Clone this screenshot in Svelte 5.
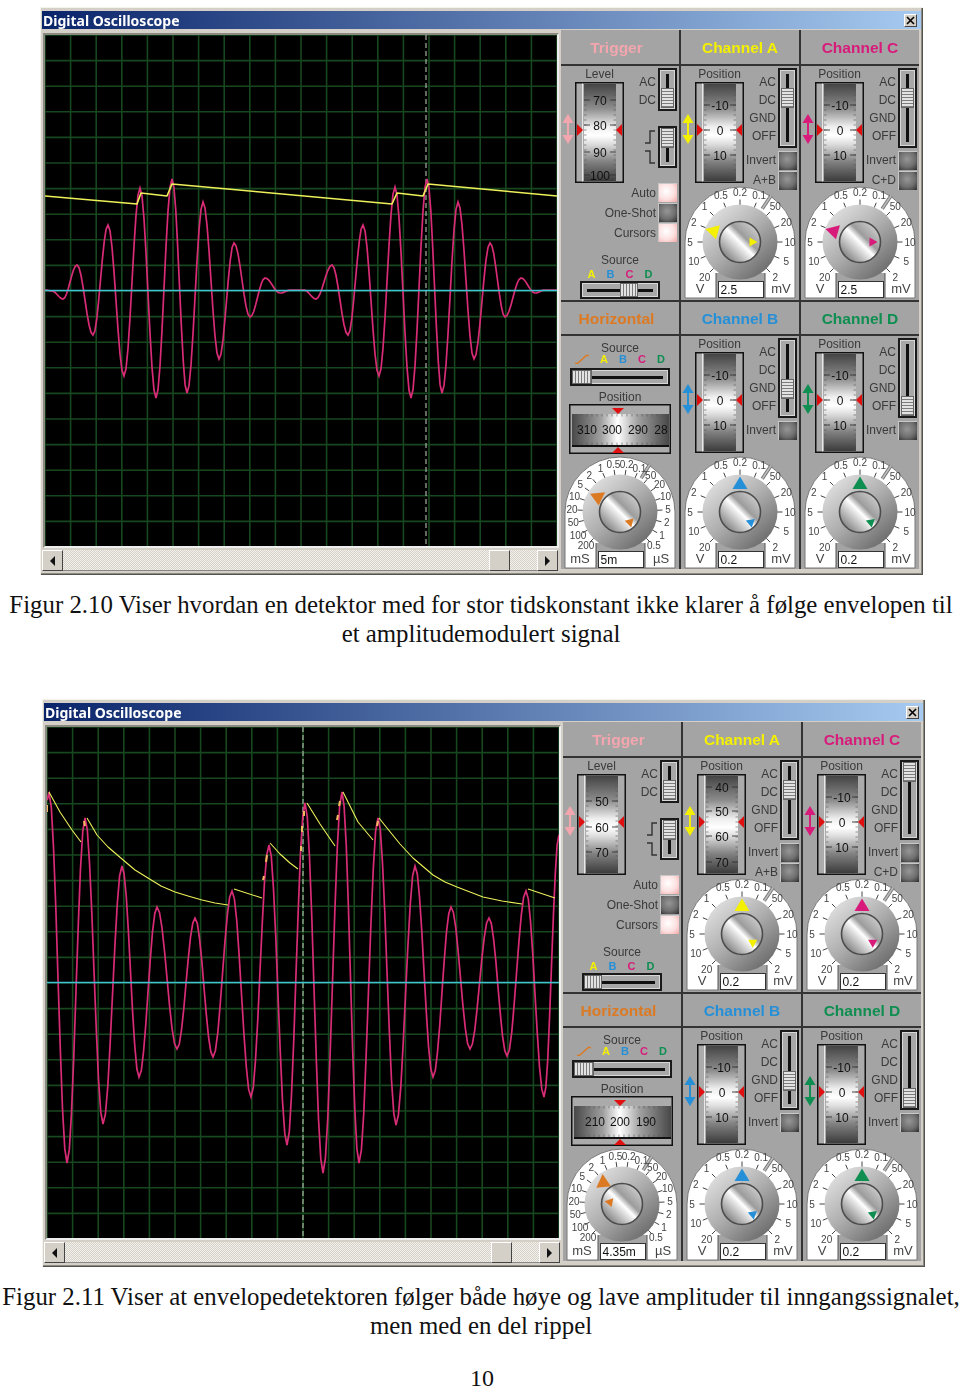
<script>
	const VOLTS = ["20", "10", "5", "2", "1", "0.5", "0.2", "0.1", "50", "20", "10", "5", "2"];
	const TIMES = ["200", "100", "50", "20", "10", "5", "2", "1", "0.5", "0.2", "0.1", "50", "20", "10", "5", "2", "1", "0.5"];
	const ZERO = [["-10", 23], ["0", 48], ["10", 73]];

	const YELLOW = "#f4f000", PINK = "#d81b7a", BLUE = "#2590d8", GREEN = "#0e8e50", ORANGE = "#dc7a24", ROSE = "#f3a6ae";

	const wavePath = (points) => {
		let d = `M${points[0][0]} ${points[0][1]}`;
		for (let i = 1; i < points.length; i++) {
			const [x0, y0] = points[i - 1];
			const [x1, y1] = points[i];
			for (let s = 1; s <= 8; s++) {
				const t = s / 8;
				const y = y0 + ((y1 - y0) * (1 - Math.cos(Math.PI * t))) / 2;
				d += `L${(x0 + (x1 - x0) * t).toFixed(1)} ${y.toFixed(1)}`;
			}
		}
		return d;
	};

	const linePath = (segments) =>
		segments.map((seg) => "M" + seg.map((p) => p.join(" ")).join("L")).join("");

	const polar = (r, deg) => [
		59 + r * Math.sin((deg * Math.PI) / 180),
		57 - r * Math.cos((deg * Math.PI) / 180)
	];

	const voltCh = (name, color, value, thumb, labels, big, small, extra) => ({
		name, color, value, thumb, labels, big, small, extra
	});

	const scopes = [
		{
			ox: 45,
			oy: 35,
			wave: wavePath([
				[45, 290], [52, 291], [63, 299], [77, 265], [93, 335], [108, 225], [124, 376], [140, 188],
				[156, 398], [172, 179], [187, 393], [203, 202], [219, 359], [234, 243], [250, 317], [265, 278],
				[280, 293], [291, 290], [304, 290], [316, 299], [332, 265], [348, 335], [363, 225], [379, 376],
				[395, 187], [411, 398], [427, 179], [442, 393], [458, 202], [474, 359], [490, 243], [505, 317],
				[521, 278], [535, 293], [545, 290], [557, 290]
			]),
			env: linePath([[[45, 196], [137, 204], [141, 193], [167, 196], [172, 184], [392, 204], [397, 193], [423, 196], [428, 184], [557, 196]]]),
			envWidth: 1.6,
			marks: "",
			cursor: 426,
			zero: 290.5,
			level: [["70", 18], ["80", 43], ["90", 70], ["100", 93]],
			hwheel: [["310", 15], ["300", 40], ["290", 66], ["28", 89]],
			srcThumb: 38,
			time: "5m",
			timeBig: { x: -22, y: -14, r: 175 },
			timeSmall: { x: 9, y: 10, r: -75 },
			a: voltCh("Channel A", YELLOW, "2.5", 18, ZERO, { x: -26, y: -10, r: 165 }, { x: 13, y: 0, r: 90 }, "A+B"),
			c: voltCh("Channel C", PINK, "2.5", 18, ZERO, { x: -26, y: -10, r: 165 }, { x: 13, y: 0, r: 90 }, "C+D"),
			b: voltCh("Channel B", BLUE, "0.2", 39, ZERO, { x: 0, y: -28, r: 0 }, { x: 10, y: 10, r: -70 }),
			d: voltCh("Channel D", GREEN, "0.2", 56, ZERO, { x: 0, y: -28, r: 0 }, { x: 10, y: 10, r: -70 })
		},
		{
			ox: 47,
			oy: 727,
			wave: wavePath([
				[47, 800], [49, 793], [67, 1163], [85, 818], [103, 1124], [122, 866], [139, 1077], [157, 907],
				[177, 1049], [195, 918], [213, 1057], [232, 891], [251, 1097], [269, 845], [287, 1145], [305, 803],
				[323, 1173], [342, 792], [359, 1163], [378, 818], [396, 1125], [415, 866], [433, 1077], [451, 907],
				[470, 1049], [489, 918], [507, 1056], [526, 891], [544, 1097], [559, 835]
			]),
			env: linePath([
				[[49, 792], [60, 812], [72, 830], [81, 842]],
				[[87, 818], [97, 835], [108, 847], [122, 859], [135, 870], [148, 878], [161, 886], [175, 892], [188, 896], [202, 900], [215, 903], [228, 905]],
				[[234, 889], [262, 898]],
				[[270, 843], [280, 854], [290, 863], [298, 869]],
				[[307, 803], [320, 824], [335, 846]],
				[[343, 792], [358, 822], [373, 840]],
				[[379, 818], [387, 828], [400, 844], [413, 858], [433, 875], [445, 882], [457, 887], [470, 892], [483, 897], [502, 901], [522, 904]],
				[[528, 889], [555, 898]]
			]),
			envWidth: 1.1,
			marks: linePath([
				[[47, 805], [47, 812]], [[84, 821], [85, 826]], [[267, 855], [266, 862]], [[264, 876], [263, 880]],
				[[301, 846], [301, 851]], [[302, 826], [302, 832]], [[304, 811], [304, 816]], [[340, 801], [339, 806]],
				[[338, 815], [337, 820]], [[378, 821], [377, 826]]
			]),
			cursor: 303,
			zero: 982.5,
			level: [["50", 27], ["60", 53], ["70", 78]],
			hwheel: [["210", 21], ["200", 46], ["190", 72]],
			srcThumb: 0,
			time: "4.35m",
			timeBig: { x: -18, y: -21, r: 115 },
			timeSmall: { x: -13, y: -2, r: -80 },
			a: voltCh("Channel A", YELLOW, "0.2", 18, [["40", 13], ["50", 37], ["60", 62], ["70", 88]], { x: 0, y: -28, r: 0 }, { x: 10, y: 8, r: -60 }, "A+B"),
			c: voltCh("Channel C", PINK, "0.2", 0, ZERO, { x: 0, y: -28, r: 0 }, { x: 10, y: 8, r: -60 }, "C+D"),
			b: voltCh("Channel B", BLUE, "0.2", 39, ZERO, { x: 0, y: -28, r: 0 }, { x: 10, y: 10, r: -70 }),
			d: voltCh("Channel D", GREEN, "0.2", 56, ZERO, { x: 0, y: -28, r: 0 }, { x: 10, y: 10, r: -70 })
		}
	];

	const gridX = Array.from({ length: 21 }, (_, i) => i * 25.6);
	const ticks = Array.from({ length: 22 }, (_, i) => i * 5);
</script>

{#snippet dial(labels, radius, start, step, slit, left, right, value, color, big, small)}
	<svg class="dial" width="118" height="114" viewBox="0 0 118 114">
		<path d="M4 113V57A55 55 0 0 1 114 57V113Z" fill="#fff" stroke="#777" stroke-width="1" />
		<path d="M35 113.5V88H84V113.5Z" fill="#a4a4a4" />
		<path d="M35 113V88M84 113V88" stroke="#555" stroke-width="1" />
		<line x1={polar(40, slit)[0]} y1={polar(40, slit)[1]} x2={polar(56, slit)[0]} y2={polar(56, slit)[1]} stroke="#777" stroke-width="3.5" />
		<line x1={polar(40, slit)[0]} y1={polar(40, slit)[1]} x2={polar(56, slit)[0]} y2={polar(56, slit)[1]} stroke="#bbb" stroke-width="1.6" />
		{#each labels as text, i}
			{@const deg = start + i * step}
			{@const p = polar(radius, deg)}
			{@const t0 = polar(37, deg)}
			{@const t1 = polar(42.5, deg)}
			<line x1={t0[0]} y1={t0[1]} x2={t1[0]} y2={t1[1]} stroke="#444" stroke-width="1" />
			<text x={p[0]} y={p[1] + 3.5} text-anchor="middle">{text}</text>
		{/each}
		<circle cx="59" cy="57" r="37.5" fill="url(#knobOuter)" />
		<circle cx="59" cy="57" r="20.5" fill="url(#knobInner)" stroke="#4c4c4c" stroke-width="1.6" />
		<polygon points="0,-7.5 7.5,5 -7.5,5" fill={color} transform="translate({59 + big.x} {57 + big.y}) rotate({big.r})" />
		<polygon points="0,-4.5 4.5,3.5 -4.5,3.5" fill={color} transform="translate({59 + small.x} {57 + small.y}) rotate({small.r})" />
		<text class="unit" x="19" y="108" text-anchor="middle">{left}</text>
		<text class="unit" x="100" y="108" text-anchor="middle">{right}</text>
		<rect x="37.5" y="96.5" width="45" height="16" fill="#fff" stroke="#333" stroke-width="1" />
		<text class="val" x="39.5" y="108.5">{value}</text>
	</svg>
{/snippet}

{#snippet wheel(labels)}
	<svg class="wheel" width="49" height="101" viewBox="0 0 49 101">
		<rect x="0.75" y="0.75" width="47.5" height="99.5" fill="#ababab" stroke="#111" stroke-width="1.5" />
		<path d="M7.5 1.5V99.5" stroke="#e8e8e8" stroke-width="1" />
		<svg x="9" y="2" width="32" height="97" viewBox="0 0 32 97">
			<rect width="32" height="97" fill="url(#drumV)" />
			{#each ticks as t}
				<path d="M0 {(labels[0][1] % 5) - 2 + t}H2.5M29.5 {(labels[0][1] % 5) - 2 + t}H32" stroke="#555" stroke-width="0.6" />
			{/each}
			{#each labels as [text, y]}
				<path d="M0 {y - 2}H6M26 {y - 2}H32" stroke="#333" stroke-width="0.9" />
				<text x="16" y={y + 2.5} text-anchor="middle">{text}</text>
			{/each}
		</svg>
		<polygon points="2,42 8,48 2,54" fill="#e01010" />
		<polygon points="47,42 41,48 47,54" fill="#e01010" />
	</svg>
{/snippet}

{#snippet hwheel(labels)}
	<svg class="wheel" width="102" height="50" viewBox="0 0 102 50">
		<rect x="0.75" y="0.75" width="100.5" height="48.5" fill="#ababab" stroke="#111" stroke-width="1.5" />
		<svg x="3" y="10" width="97" height="31" viewBox="0 0 97 31">
			<rect width="97" height="31" fill="url(#drumH)" />
			{#each ticks as t}
				<path d="M{t} 0V2.5M{t} 28.5V31" stroke="#555" stroke-width="0.6" />
			{/each}
			{#each labels as [text, x]}
				<text x={x} y="20" text-anchor="middle">{text}</text>
			{/each}
		</svg>
		<rect x="3" y="41" width="97" height="2" fill="#111" />
		<polygon points="43,4 55,4 49,10" fill="#e01010" />
		<polygon points="43,49 55,49 49,43" fill="#e01010" />
	</svg>
{/snippet}

{#snippet upDown(color)}
	<svg class="updown" width="12" height="32" viewBox="0 0 12 32">
		<path d="M6 8V24" stroke={color} stroke-width="2" />
		<polygon points="6,1 11.5,10 0.5,10" fill={color} />
		<polygon points="6,31 11.5,22 0.5,22" fill={color} />
	</svg>
{/snippet}

{#snippet vswitch(height, top)}
	<div class="vswitch" style="height:{height}px">
		<span class="thumb" style="top:{top}px"></span>
	</div>
{/snippet}

{#snippet hslider(width, left, thumbWidth)}
	<div class="hslider" style="width:{width}px">
		<span class="thumb-h" style="left:{left}px;width:{thumbWidth}px"></span>
	</div>
{/snippet}

{#snippet channel(ch)}
	<div class="cell">
		<h3 style="color:{ch.color}">{ch.name}</h3>
		<div class="body">
			<div class="top">
				<div class="arrow-col">{@render upDown(ch.color)}</div>
				<div class="wheel-col">
					<span class="label">Position</span>
					{@render wheel(ch.labels)}
				</div>
				<div class="right-col">
					<div class="row switch-row">
						<div class="coupling">
							<span>AC</span><span>DC</span><span>GND</span><span>OFF</span>
						</div>
						{@render vswitch(80, ch.thumb)}
					</div>
					<div class="row btn-row"><span>Invert</span><i class="btn"></i></div>
					{#if ch.extra}
						<div class="row btn-row"><span>{ch.extra}</span><i class="btn"></i></div>
					{/if}
				</div>
			</div>
			{@render dial(VOLTS, 50, -135, 22.5, 33.75, "V", "mV", ch.value, ch.color, ch.big, ch.small)}
		</div>
	</div>
{/snippet}

{#snippet oscilloscope(s)}
	<section class="scope">
		<header class="titlebar">
			<span>Digital Oscilloscope</span>
			<button class="close" aria-label="Close">
				<svg width="9" height="9" viewBox="0 0 9 9"><path d="M1 1L8 8M8 1L1 8" stroke="#000" stroke-width="1.6" /></svg>
			</button>
		</header>
		<div class="scope-body">
			<div class="display">
				<div class="screen-frame">
					<svg class="screen" width="512" height="511" viewBox="{s.ox} {s.oy} 512 511">
						<rect x={s.ox} y={s.oy} width="512" height="511" fill="#000" />
						{#each gridX as g}
							<line x1={s.ox + g} y1={s.oy} x2={s.ox + g} y2={s.oy + 511} class="grid" />
							<line x1={s.ox} y1={s.oy + g} x2={s.ox + 512} y2={s.oy + g} class="grid" />
						{/each}
						<line x1={s.cursor} y1={s.oy} x2={s.cursor} y2={s.oy + 511} stroke="#c8d0c0" stroke-width="1" stroke-dasharray="5 3" />
						<path d={s.wave} class="wave" />
						<path d={s.env} class="env" stroke-width={s.envWidth} />
						<path d={s.marks} class="marks" />
						<line x1={s.ox} y1={s.zero} x2={s.ox + 512} y2={s.zero} stroke="#3fc3d4" stroke-width="1.6" />
					</svg>
				</div>
				<div class="scrollbar">
					<span class="sb-btn"><i class="tri-l"></i></span>
					<span class="sb-track"></span>
					<span class="sb-btn sb-thumb"></span>
					<span class="sb-track short"></span>
					<span class="sb-btn"><i class="tri-r"></i></span>
				</div>
			</div>
			<div class="controls">
				<div class="cell">
					<h3 class="offset" style="color:{ROSE}">Trigger</h3>
					<div class="body">
						<div class="top">
							<div class="arrow-col">{@render upDown(ROSE)}</div>
							<div class="wheel-col">
								<span class="label">Level</span>
								{@render wheel(s.level)}
							</div>
							<div class="right-col">
								<div class="row switch-row">
									<div class="coupling"><span>AC</span><span>DC</span></div>
									{@render vswitch(43, 18)}
								</div>
								<div class="row edge-row">
									<svg width="12" height="38" viewBox="0 0 12 38">
										<path d="M1 15H6V3H11M1 23H6V35H11" fill="none" stroke="#333" stroke-width="1.4" />
									</svg>
									{@render vswitch(42, 0)}
								</div>
							</div>
						</div>
						<div class="modes">
							<div class="row btn-row"><span>Auto</span><i class="btn lit"></i></div>
							<div class="row btn-row"><span>One-Shot</span><i class="btn"></i></div>
							<div class="row btn-row"><span>Cursors</span><i class="btn lit"></i></div>
						</div>
						<div class="source">
							<span class="label">Source</span>
							<div class="abcd">
								<b style="color:{YELLOW}">A</b><b style="color:{BLUE}">B</b><b style="color:{PINK}">C</b><b style="color:{GREEN}">D</b>
							</div>
							{@render hslider(80, s.srcThumb, 18)}
						</div>
					</div>
				</div>
				{@render channel(s.a)}
				{@render channel(s.c)}
				<div class="cell lower">
					<h3 class="offset" style="color:{ORANGE}">Horizontal</h3>
					<div class="body">
						<div class="horiz">
							<span class="label">Source</span>
							<div class="abcd wide">
								<svg width="14" height="12" viewBox="0 0 16 12"><path d="M0 11H3L13 2H16" fill="none" stroke={ORANGE} stroke-width="1.6" /></svg>
								<b style="color:{YELLOW}">A</b><b style="color:{BLUE}">B</b><b style="color:{PINK}">C</b><b style="color:{GREEN}">D</b>
							</div>
							{@render hslider(100, 0, 20)}
							<span class="label pos">Position</span>
							{@render hwheel(s.hwheel)}
						</div>
						{@render dial(TIMES, 48, -135, 270 / 17, 32, "mS", "µS", s.time, ORANGE, s.timeBig, s.timeSmall)}
					</div>
				</div>
				{@render channel(s.b)}
				{@render channel(s.d)}
			</div>
		</div>
	</section>
{/snippet}

<svg class="defs" aria-hidden="true">
	<defs>
		<linearGradient id="drumV" x1="0" y1="0" x2="0" y2="1">
			<stop offset="0" stop-color="#444" />
			<stop offset="0.25" stop-color="#8c8c8c" />
			<stop offset="0.44" stop-color="#eee" />
			<stop offset="0.53" stop-color="#fff" />
			<stop offset="0.62" stop-color="#ddd" />
			<stop offset="0.8" stop-color="#828282" />
			<stop offset="1" stop-color="#3c3c3c" />
		</linearGradient>
		<linearGradient id="drumH" x1="0" y1="0" x2="1" y2="0">
			<stop offset="0" stop-color="#484848" />
			<stop offset="0.3" stop-color="#a0a0a0" />
			<stop offset="0.47" stop-color="#fff" />
			<stop offset="0.68" stop-color="#a0a0a0" />
			<stop offset="1" stop-color="#484848" />
		</linearGradient>
		<linearGradient id="knobOuter" x1="0.15" y1="0.1" x2="0.85" y2="0.9">
			<stop offset="0" stop-color="#dedede" />
			<stop offset="0.5" stop-color="#acacac" />
			<stop offset="1" stop-color="#6c6c6c" />
		</linearGradient>
		<linearGradient id="knobInner" x1="0.1" y1="0.9" x2="0.9" y2="0.1">
			<stop offset="0" stop-color="#777" />
			<stop offset="0.38" stop-color="#dcdcdc" />
			<stop offset="0.5" stop-color="#fff" />
			<stop offset="0.64" stop-color="#9c9c9c" />
			<stop offset="1" stop-color="#d0d0d0" />
		</linearGradient>
	</defs>
</svg>

<main class="page">
	{@render oscilloscope(scopes[0])}
	<p class="caption">
		Figur 2.10 Viser hvordan en detektor med for stor tidskonstant ikke klarer å følge envelopen til<br />
		et amplitudemodulert signal
	</p>
	<div class="second">{@render oscilloscope(scopes[1])}</div>
	<p class="caption">
		Figur 2.11 Viser at envelopedetektoren følger både høye og lave amplituder til inngangssignalet,<br />
		men med en del rippel
	</p>
	<p class="pageno">10</p>
</main>

<style>
	:global(body) {
		background: #fff;
		overflow: hidden;
	}

	.defs {
		display: block;
		width: 0;
		height: 0;
	}

	.page {
		width: 960px;
		padding-top: 7px;
		font-family: "Liberation Serif", "Times New Roman", serif;
		color: #111;
	}

	.scope {
		width: 883px;
		height: 568px;
		margin-left: 40px;
		padding: 4px 2px 6px;
		box-sizing: border-box;
		background: #d4d0c8;
		box-shadow: inset 1px 1px 0 #f4f2ec, inset -1px -1px 0 #55534e, inset -2px -2px 0 #8c8a84;
		font-family: "Liberation Sans", Arial, sans-serif;
		filter: blur(0.35px);
	}

	.second {
		margin-top: 51px;
		margin-left: 2px;
	}

	.titlebar {
		display: flex;
		align-items: center;
		justify-content: space-between;
		height: 18px;
		margin-bottom: 1px;
		padding: 0 4px 0 1px;
		background: linear-gradient(90deg, #0a246a, #a6caf0);
		color: #fff;
		font: bold 14px "Noto Sans", Tahoma, sans-serif;
	}

	.close {
		display: flex;
		align-items: center;
		justify-content: center;
		width: 13px;
		height: 13px;
		padding: 0;
		border: 1px solid;
		border-color: #fff #444 #444 #fff;
		background: #d4d0c8;
	}

	.scope-body {
		display: flex;
		align-items: flex-start;
	}

	.display {
		width: 519px;
		flex: none;
	}

	.screen-frame {
		width: 512px;
		margin: 3px 0 2px 1px;
		border: 2px solid;
		border-color: #8a8a80 #eee #eee #8a8a80;
		line-height: 0;
	}

	.screen {
		display: block;
	}

	.grid {
		stroke: #17471f;
		stroke-width: 1.6;
	}

	.wave {
		fill: none;
		stroke: #d82c76;
		stroke-width: 1.7;
	}

	.env {
		fill: none;
		stroke: #eef05a;
		stroke-linejoin: round;
	}

	.marks {
		fill: none;
		stroke: #f5b860;
		stroke-width: 2;
	}

	.scrollbar {
		display: flex;
		width: 516px;
		height: 21px;
	}

	.sb-btn {
		display: flex;
		align-items: center;
		justify-content: center;
		flex: none;
		width: 21px;
		box-sizing: border-box;
		background: #d4d0c8;
		border: 1px solid;
		border-color: #fff #444 #444 #fff;
	}

	.sb-track {
		flex: 1;
		background: repeating-conic-gradient(#f4f2ec 0 25%, #d4d0c8 0 50%) 0 0 / 2px 2px;
		border-bottom: 1px solid #888;
	}

	.sb-track.short {
		flex: none;
		width: 27px;
	}

	.tri-l,
	.tri-r {
		width: 0;
		height: 0;
		border: 5px solid transparent;
	}

	.tri-l {
		border-right-color: #111;
		border-left-width: 0;
	}

	.tri-r {
		border-left-color: #111;
		border-right-width: 0;
	}

	.controls {
		display: grid;
		grid-template-columns: repeat(3, 118px);
		grid-template-rows: 270px 269px;
		column-gap: 2px;
		flex: none;
		background: #333;
	}

	.cell {
		display: flex;
		flex-direction: column;
		row-gap: 2px;
	}

	.cell:nth-child(n + 4) {
		padding-top: 2px;
	}

	h3 {
		height: 34px;
		margin: 0;
		background: #a4a4a4;
		font: bold 15.5px/36px "Liberation Sans", Arial, sans-serif;
		text-align: center;
	}

	h3.offset {
		padding-right: 7px;
	}

	.cell:nth-child(n + 4) h3 {
		height: 32px;
		line-height: 34px;
	}

	.body {
		flex: 1;
		background: #a4a4a4;
		color: #3a3a3a;
		font-size: 12px;
	}

	.top {
		display: flex;
		height: 119px;
	}

	.arrow-col {
		width: 14px;
		padding-top: 47px;
		padding-left: 1px;
		box-sizing: border-box;
		flex: none;
	}

	.updown {
		display: block;
	}

	.wheel-col {
		display: flex;
		flex-direction: column;
		align-items: center;
		width: 49px;
		flex: none;
		padding-top: 1px;
	}

	.label {
		display: block;
		height: 15px;
		line-height: 15px;
		font-size: 12px;
		text-align: center;
	}

	.wheel {
		display: block;
		flex: none;
	}

	.wheel text {
		font: 12px "Liberation Sans", Arial, sans-serif;
		fill: #111;
	}

	.right-col {
		flex: 1;
		padding: 2px 2px 0 0;
	}

	.row {
		display: flex;
		justify-content: flex-end;
		gap: 2px;
	}

	.switch-row {
		align-items: flex-start;
	}

	.coupling {
		display: flex;
		flex-direction: column;
		align-items: flex-end;
		padding-top: 5px;
		line-height: 18px;
	}

	.vswitch {
		position: relative;
		box-sizing: border-box;
		width: 19px;
		border: 2px solid #1a1a1a;
		outline: 1px solid #d8d8d8;
		outline-offset: -3px;
		background: #a8a8a8;
	}

	.vswitch::before {
		content: "";
		position: absolute;
		left: 6px;
		top: 4px;
		bottom: 4px;
		width: 3px;
		background: #111;
	}

	.thumb {
		position: absolute;
		left: 1px;
		width: 13px;
		height: 20px;
		background: repeating-linear-gradient(#e2e2e2 0 2px, #7c7c7c 2px 3px);
		border: 1px solid #666;
		box-sizing: border-box;
	}

	.btn-row {
		align-items: center;
		margin-top: 3px;
		height: 18px;
	}

	.btn-row + .btn-row {
		margin-top: 2px;
	}

	.btn {
		flex: none;
		display: block;
		width: 19px;
		height: 19px;
		background: radial-gradient(circle at 45% 40%, #969696, #6e6e6e 55%, #2c2c2c);
		border-top: 1px solid #c8c8c8;
		border-left: 1px solid #c8c8c8;
		box-sizing: border-box;
	}

	.btn.lit {
		background: radial-gradient(circle at 40% 40%, #fff, #fde0e0 55%, #f0a6a6);
	}

	.edge-row {
		align-items: center;
		margin-top: 15px;
	}

	.modes {
		display: flex;
		flex-direction: column;
		margin-top: -3px;
		padding-right: 2px;
	}

	.modes .btn-row,
	.modes .btn-row + .btn-row {
		height: 19px;
		margin-top: 1px;
	}

	.source {
		display: flex;
		flex-direction: column;
		align-items: center;
		margin-top: 11px;
	}

	.abcd {
		display: flex;
		justify-content: center;
		align-items: center;
		gap: 11px;
		height: 14px;
		margin-top: -1px;
		font-size: 11px;
	}

	.abcd.wide {
		box-sizing: content-box;
		height: 14px;
		margin-top: -4px;
		padding-bottom: 2px;
	}

	.hslider {
		position: relative;
		box-sizing: border-box;
		height: 18px;
		border: 2px solid #1a1a1a;
		outline: 1px solid #d8d8d8;
		outline-offset: -3px;
		background: #a8a8a8;
	}

	.hslider::before {
		content: "";
		position: absolute;
		top: 6px;
		left: 5px;
		right: 5px;
		height: 3px;
		background: #111;
	}

	.thumb-h {
		position: absolute;
		top: 0;
		height: 14px;
		background: repeating-linear-gradient(90deg, #e2e2e2 0 2px, #7c7c7c 2px 3px);
		border: 1px solid #666;
		box-sizing: border-box;
	}

	.horiz {
		display: flex;
		flex-direction: column;
		align-items: center;
		height: 119px;
		padding-top: 5px;
		box-sizing: border-box;
	}

	.horiz .pos {
		margin-top: 4px;
		height: 14px;
	}

	.dial {
		display: block;
	}

	.dial text {
		font: 10px "Liberation Sans", Arial, sans-serif;
		fill: #444;
	}

	.dial text.unit {
		font-size: 13px;
	}

	.dial text.val {
		font-size: 12px;
		fill: #111;
	}

	.caption {
		margin: 15px 0 0;
		padding-left: 2px;
		font-size: 24.85px;
		line-height: 29px;
		text-align: center;
		white-space: nowrap;
	}

	.pageno {
		margin: 27px 0 0;
		padding-left: 4px;
		font-size: 24px;
		line-height: 22px;
		text-align: center;
	}
</style>
